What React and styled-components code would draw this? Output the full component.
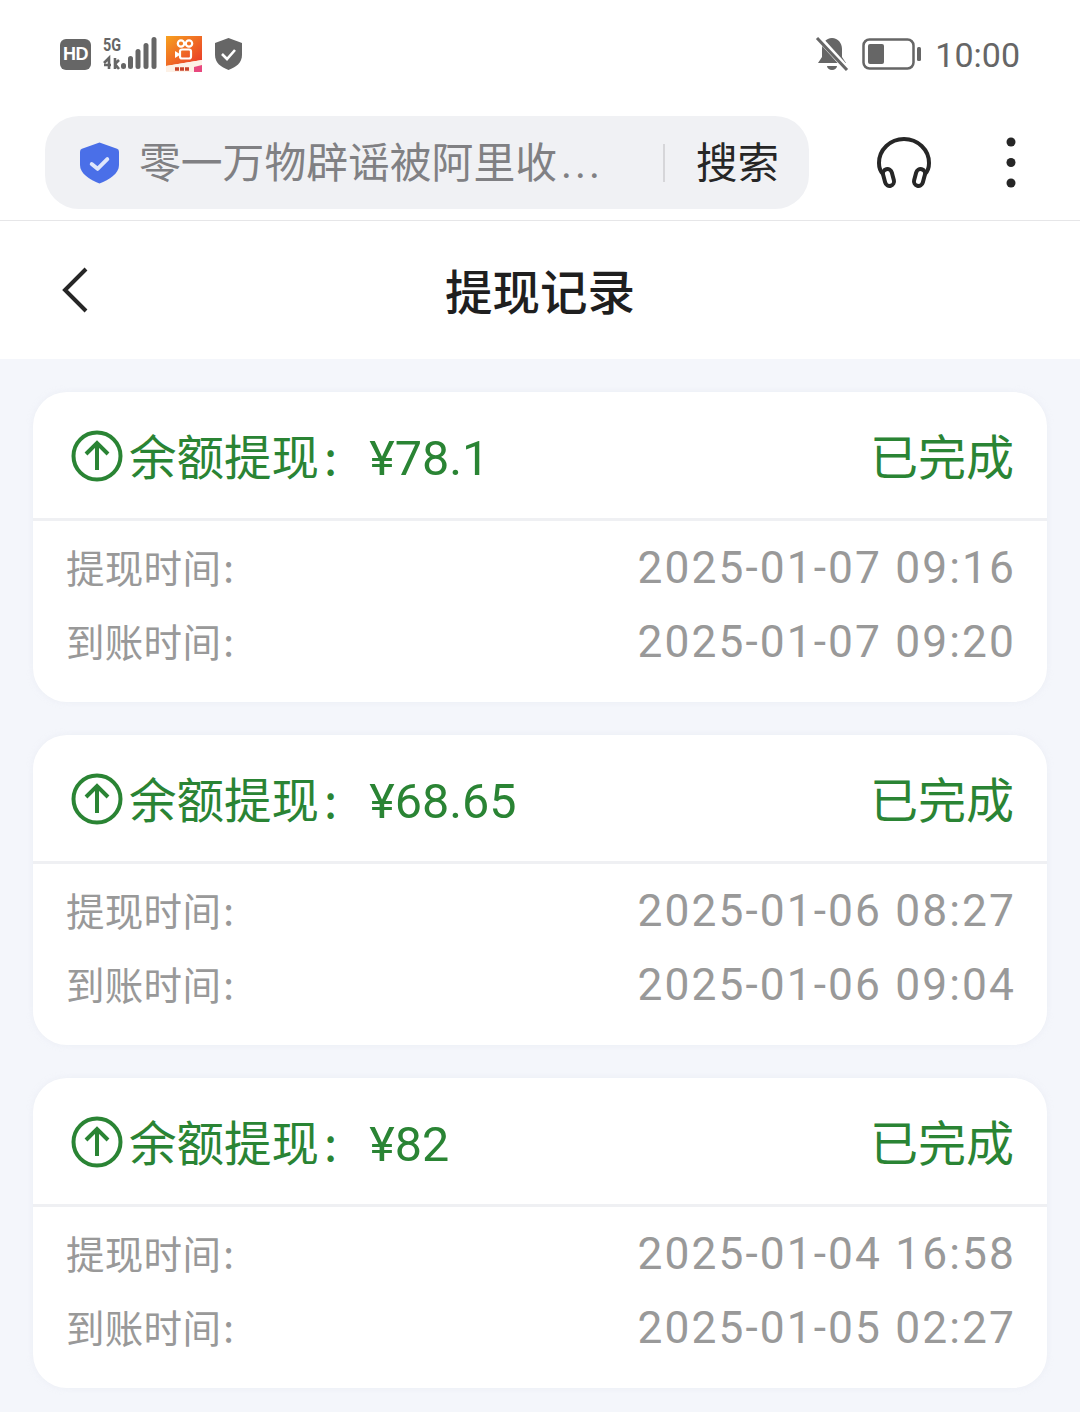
import React from "react";
import styled, { createGlobalStyle } from "styled-components";

const GlobalStyle = createGlobalStyle`
  html, body {
    margin: 0;
    padding: 0;
    background: #f4f6fb;
    font-family: "Noto Sans CJK SC", "Noto Sans", sans-serif;
  }
  * { box-sizing: border-box; }
`;

const Page = styled.div`
  width: 1080px;
  height: 1412px;
  overflow: hidden;
  background: #f4f6fb;
`;

const TopArea = styled.div`
  background: #fff;
  height: 221px;
  border-bottom: 1px solid #e6e6e8;
`;

const StatusBar = styled.div`
  height: 116px;
  padding: 36px 60px 0;
  display: flex;
  justify-content: space-between;
  align-items: flex-start;
`;

const StatusGroup = styled.div`
  display: flex;
  align-items: center;
  height: 36px;
`;

const HdBadge = styled.span`
  width: 31px;
  height: 31px;
  border-radius: 6px;
  background: #666;
  color: #fff;
  font-family: "Liberation Sans", sans-serif;
  font-size: 18px;
  font-weight: 700;
  line-height: 31px;
  text-align: center;
  letter-spacing: -0.5px;
`;

const SignalWrap = styled.div`
  position: relative;
  width: 54px;
  height: 36px;
  margin-left: 12px;
`;

const NetworkLabel = styled.span`
  position: absolute;
  left: 0;
  top: 0;
  font-family: Roboto, sans-serif;
  font-size: 18px;
  font-weight: 700;
  line-height: 17px;
  color: #666;
  transform: scaleX(0.8);
  transform-origin: left center;
`;

const Clock = styled.span`
  font-family: Roboto, sans-serif;
  font-size: 34px;
  font-weight: 400;
  line-height: 36px;
  color: #666;
  margin-left: 13px;
  margin-top: 1px;
`;

const SearchRow = styled.div`
  display: flex;
  align-items: center;
  padding-left: 45px;
`;

const SearchBar = styled.div`
  width: 764px;
  height: 93px;
  border-radius: 34px;
  background: #f0f1f4;
  display: flex;
  align-items: center;
  padding-left: 35px;
`;

const SearchText = styled.span`
  margin: -2px 0 0 20px;
  width: 524px;
  font-size: 41.8px;
  line-height: 93px;
  color: #808083;
  white-space: nowrap;
`;

const Ellipsis = styled.span`
  font-family: Roboto, sans-serif;
  letter-spacing: 3px;
  margin-left: 4px;
`;

const Divider = styled.span`
  width: 2px;
  height: 38px;
  background: #d6d6d9;
`;

const SearchButton = styled.span`
  margin: -5px 0 0 31px;
  font-size: 41.5px;
  line-height: 93px;
  color: #262626;
`;

const RowIcons = styled.div`
  display: flex;
  align-items: center;
  margin-left: 68px;
`;

const MoreDots = styled.svg`
  margin-left: 75px;
`;

const NavBar = styled.div`
  height: 138px;
  background: #fff;
  position: relative;
  display: flex;
  align-items: center;
  justify-content: center;
`;

const BackIcon = styled.svg`
  position: absolute;
  left: 61px;
  top: 46px;
`;

const NavTitle = styled.h1`
  margin: 0;
  font-size: 47.5px;
  font-weight: 500;
  line-height: 66px;
  color: #1f1f1f;
`;

const CardList = styled.div`
  padding: 33px 33px 0;
  display: flex;
  flex-direction: column;
  gap: 33px;
`;

const Card = styled.section`
  height: 310px;
  background: #fff;
  border-radius: 34px;
  box-shadow: 0 0 6px rgba(220, 224, 235, 0.35);
`;

const CardHeader = styled.div`
  height: 129px;
  padding: 0 33px 0 38px;
  display: flex;
  align-items: center;
  justify-content: space-between;
  border-bottom: 3px solid #eff0f3;
  color: #2a8434;
`;

const HeaderLeft = styled.div`
  display: flex;
  align-items: center;
`;

const HeaderLabel = styled.span`
  margin: 4px 0 0 6px;
  font-size: 47.5px;
  line-height: 66px;
  white-space: nowrap;
`;

const Colon = styled.span`
  margin-left: 5px;
`;

const Amount = styled.span`
  font-family: Roboto, sans-serif;
  font-size: 48.5px;
  margin-left: 32px;
`;

const Status = styled.span`
  font-size: 48px;
  line-height: 66px;
  margin-top: -2px;
`;

const CardBody = styled.div`
  padding: 8px 33px 0;
`;

const InfoRow = styled.div`
  height: 74px;
  display: flex;
  align-items: center;
  justify-content: space-between;
  color: #999;
`;

const InfoLabel = styled.span`
  font-size: 38.5px;
  line-height: 50px;
  letter-spacing: 0.3px;
  margin-top: -1px;
`;

const LabelColon = styled.span`
  margin-left: 2px;
`;

const InfoValue = styled.span`
  font-family: Roboto, sans-serif;
  font-size: 44.3px;
  line-height: 50px;
  letter-spacing: 2.1px;
  margin: 4px -2px 0 0;
`;

const SignalIcon = () => (
  <SignalWrap>
    <NetworkLabel>5G</NetworkLabel>
    <svg width="54" height="36" viewBox="0 0 54 36">
      <path d="M1 27l5-5v11M1 29h7" stroke="#666" strokeWidth="2.6" fill="none" />
      <path d="M12 22v11M12 28l4-4M12 28l4 5" stroke="#666" strokeWidth="2.6" fill="none" />
      <rect x="18" y="27" width="5" height="6" rx="2.500" fill="#666" />
      <rect x="25" y="20" width="5" height="13" rx="2.500" fill="#666" />
      <rect x="32.500" y="13" width="5" height="20" rx="2.500" fill="#666" />
      <rect x="40.500" y="7" width="5" height="26" rx="2.500" fill="#666" />
      <rect x="48.500" y="1" width="5" height="32" rx="2.500" fill="#666" />
    </svg>
  </SignalWrap>
);

const AppIcon = () => (
  <svg width="36" height="36" viewBox="0 0 36 36" style={{ marginLeft: 9 }}>
    <defs>
      <linearGradient id="app" x1="0" y1="0" x2="1" y2="1">
        <stop offset="0" stopColor="#f7a11f" />
        <stop offset="1" stopColor="#e8352a" />
      </linearGradient>
    </defs>
    <path d="M0 0h36v24L0 30z" fill="url(#app)" />
    <path d="M0 30l36-6v12H0z" fill="#fdf1e6" />
    <path d="M28 36v-5l8-2v7z" fill="#e8487e" />
    <circle cx="15" cy="7.500" r="3.200" stroke="#fff" strokeWidth="2.200" fill="none" />
    <circle cx="23" cy="7.500" r="3.200" stroke="#fff" strokeWidth="2.200" fill="none" />
    <rect x="14" y="13.500" width="11" height="9" rx="2" stroke="#fff" strokeWidth="2.200" fill="none" />
    <path d="M9 15l4 2.500v2L9 22z" fill="#fff" />
    <path d="M9 33h15" stroke="#c9432a" strokeWidth="3.500" strokeDasharray="4 1" />
  </svg>
);

const GuardIcon = () => (
  <svg width="27" height="32" viewBox="0 0 27 32" style={{ marginLeft: 13 }}>
    <path d="M13.500 0L27 5v12c0 8-6 12-13.500 15C6 29 0 25 0 17V5z" fill="#666" />
    <path d="M7 16l5 5 8-9" stroke="#fff" strokeWidth="2.600" fill="none" />
  </svg>
);

const MuteIcon = () => (
  <svg width="34" height="36" viewBox="0 0 34 36">
    <path d="M17 2c6 0 10 5 10 11v8l4 6H3l4-6v-8c0-6 4-11 10-11z" fill="#666" />
    <path d="M12 30a5 4 0 0 0 10 0z" fill="#666" />
    <path d="M3 1l30 33" stroke="#fff" strokeWidth="6" />
    <path d="M2 2l30 32" stroke="#666" strokeWidth="3" />
  </svg>
);

const BatteryIcon = () => (
  <svg width="60" height="32" viewBox="0 0 60 32" style={{ marginLeft: 13 }}>
    <rect x="1.500" y="1.500" width="50" height="29" rx="6" stroke="#666" strokeWidth="2.500" fill="none" />
    <rect x="6" y="6" width="16" height="20" rx="2" fill="#666" />
    <rect x="55" y="9" width="4" height="14" rx="1.500" fill="#666" />
  </svg>
);

const ShieldIcon = () => (
  <svg width="39" height="42" viewBox="0 0 40 42">
    <path d="M20 0l18 6.500q2 .8 2 3V23c0 9-10 15-20 19C10 38 0 32 0 23V9.500q0-2.200 2-3z" fill="#4a6fe8" />
    <path d="M12 22l6 5 10-10" stroke="#dfe6fb" strokeWidth="4" fill="none" strokeLinecap="round" strokeLinejoin="round" />
  </svg>
);

const HeadphonesIcon = () => (
  <svg width="54" height="52" viewBox="0 0 54 52" fill="none" stroke="#262626" strokeWidth="4">
    <path d="M6 37C3 34 2 30 2 26a25 24 0 0 1 50 0c0 4-1 8-4 11" />
    <rect x="7" y="32" width="9" height="17" rx="4.500" transform="rotate(-15 11.500 40.500)" />
    <rect x="38" y="32" width="9" height="17" rx="4.500" transform="rotate(15 42.500 40.500)" />
  </svg>
);

const UpCircleIcon = () => (
  <svg width="52" height="52" viewBox="0 0 52 52" fill="none" stroke="#2a8434" strokeWidth="4" style={{ marginTop: 2 }}>
    <circle cx="26" cy="26" r="23.500" />
    <path d="M26 40V14M15 24l11-11 11 11" />
  </svg>
);

const records = [
  { amount: "¥78.1", applied: "2025-01-07 09:16", arrived: "2025-01-07 09:20" },
  { amount: "¥68.65", applied: "2025-01-06 08:27", arrived: "2025-01-06 09:04" },
  { amount: "¥82", applied: "2025-01-04 16:58", arrived: "2025-01-05 02:27" },
];

const App = () => (
  <Page>
    <GlobalStyle />
    <TopArea>
      <StatusBar>
        <StatusGroup>
          <HdBadge>HD</HdBadge>
          <SignalIcon />
          <AppIcon />
          <GuardIcon />
        </StatusGroup>
        <StatusGroup>
          <MuteIcon />
          <BatteryIcon />
          <Clock>10:00</Clock>
        </StatusGroup>
      </StatusBar>
      <SearchRow>
        <SearchBar>
          <ShieldIcon />
          <SearchText>
            零一万物辟谣被阿里收<Ellipsis>...</Ellipsis>
          </SearchText>
          <Divider />
          <SearchButton>搜索</SearchButton>
        </SearchBar>
        <RowIcons>
          <HeadphonesIcon />
          <MoreDots width="10" height="52" viewBox="0 0 10 52" fill="#262626">
            <circle cx="5" cy="5" r="4.500" />
            <circle cx="5" cy="25.500" r="4.500" />
            <circle cx="5" cy="46" r="4.500" />
          </MoreDots>
        </RowIcons>
      </SearchRow>
    </TopArea>
    <NavBar>
      <BackIcon width="28" height="46" viewBox="0 0 28 46" fill="none" stroke="#262626" strokeWidth="4">
        <path d="M25 2L4 23l21 21" />
      </BackIcon>
      <NavTitle>提现记录</NavTitle>
    </NavBar>
    <CardList>
      {records.map((r) => (
        <Card key={r.applied}>
          <CardHeader>
            <HeaderLeft>
              <UpCircleIcon />
              <HeaderLabel>
                余额提现
                <Colon>:</Colon>
                <Amount>{r.amount}</Amount>
              </HeaderLabel>
            </HeaderLeft>
            <Status>已完成</Status>
          </CardHeader>
          <CardBody>
            <InfoRow>
              <InfoLabel>
                提现时间<LabelColon>:</LabelColon>
              </InfoLabel>
              <InfoValue>{r.applied}</InfoValue>
            </InfoRow>
            <InfoRow>
              <InfoLabel>
                到账时间<LabelColon>:</LabelColon>
              </InfoLabel>
              <InfoValue>{r.arrived}</InfoValue>
            </InfoRow>
          </CardBody>
        </Card>
      ))}
    </CardList>
  </Page>
);

export default App;
